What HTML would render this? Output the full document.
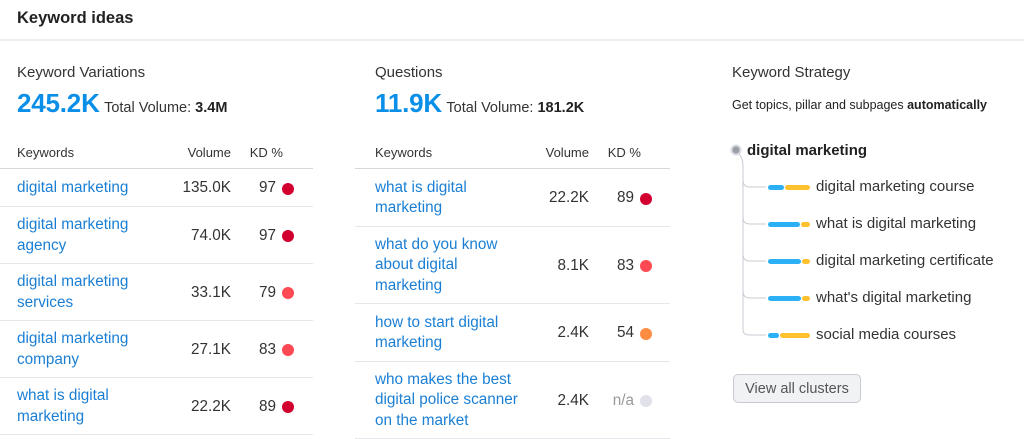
<!DOCTYPE html>
<html><head><meta charset="utf-8"><style>
*{margin:0;padding:0;box-sizing:border-box}
body{width:1024px;height:435px;overflow:hidden;background:#fff;font-family:"Liberation Sans",sans-serif;color:#333;position:relative}
.a{position:absolute;white-space:nowrap}
h1{position:absolute;left:17px;top:9px;font-size:16.5px;font-weight:bold;color:#222}
.div{position:absolute;left:0;top:39px;width:1024px;height:2px;background:#eceef2}
.sub{font-size:15px;color:#333}
.big{font-size:26px;font-weight:bold;color:#0a8fe8;letter-spacing:-0.2px}
.tv{font-size:14.5px;color:#333}
.tv b{color:#222}
.tbl{position:absolute;top:140px}
.hd{height:29px;border-bottom:1px solid #d6d8de;font-size:13px;color:#333;position:relative}
.row{border-bottom:1px solid #e6e7eb;position:relative;font-size:15.3px;line-height:20.5px}
.kw{position:absolute;color:#1a7fd4}
.vol{position:absolute;text-align:right;color:#333}
.kd{position:absolute;text-align:right;color:#333}
.dot{position:absolute;width:12px;height:12px;border-radius:50%}
.tree{position:absolute;font-size:15px;color:#333}
.bar{position:absolute;height:5px;border-radius:3px}
</style></head><body>
<h1>Keyword ideas</h1>
<div class="div"></div>

<div class="a sub" style="left:17px;top:64px">Keyword Variations</div>
<div class="a" style="left:17px;top:88px"><span class="big">245.2K</span> <span class="tv">Total Volume: <b>3.4M</b></span></div>

<div class="a sub" style="left:375px;top:64px">Questions</div>
<div class="a" style="left:375px;top:88px"><span class="big">11.9K</span> <span class="tv">Total Volume: <b>181.2K</b></span></div>

<div class="a sub" style="left:732px;top:64px">Keyword Strategy</div>
<div class="a" style="left:732px;top:98px;font-size:12.5px;color:#222">Get topics, pillar and subpages <b>automatically</b></div>

<div id="L" class="tbl" style="left:0;width:313px"></div>
<div id="M" class="tbl" style="left:355px;width:315px"></div>

<svg class="a" style="left:728px;top:142px" width="100" height="210">
<circle cx="8" cy="8" r="4.5" fill="#9a9ca6" stroke="#d8d9de" stroke-width="2"/>
<path d="M11 12 Q15 16 15 24 L15 188 Q15 193 22 193 L38 193" fill="none" stroke="#c9cbd2" stroke-width="1"/>
<path d="M15 38 Q15 45 22 45 L38 45 M15 75 Q15 82 22 82 L38 82 M15 112 Q15 119 22 119 L38 119 M15 149 Q15 156 22 156 L38 156" fill="none" stroke="#c9cbd2" stroke-width="1"/>
</svg>
<div class="tree" style="left:747px;top:142px;font-weight:bold;color:#222">digital marketing</div>
<div id="T"></div>

<div class="a" style="left:733px;top:374px;width:128px;height:29px;border:1px solid #c8cad0;border-radius:5px;background:#f1f2f4;font-size:14.5px;color:#555;text-align:center;line-height:28px">View all clusters</div>

<script>
const C={r:"#d1002f",l:"#ff4953",o:"#ff8c43",g:"#e0e1e9"};
function tbl(id,rows,volR,kdR,pl){
 let h='<div class="hd"><span class="a" style="left:'+pl+'px;top:5px">Keywords</span><span class="a" style="right:'+volR+'px;top:5px">Volume</span><span class="a" style="right:'+(kdR-7)+'px;top:5px">KD %</span></div>';
 for(const [k,v,d,c,H] of rows){
  const n=k.split('|').length;
  const mid=H/2;
  const tt=(H-20.5*n)/2;
  h+='<div class="row" style="height:'+H+'px"><div class="kw" style="left:'+pl+'px;top:'+tt+'px">'+k.split('|').join('<br>')+'</div>'+
  '<div class="vol" style="right:'+volR+'px;top:'+(mid-10)+'px">'+v+'</div>'+
  '<div class="kd" style="right:'+kdR+'px;top:'+(mid-10)+'px;'+(d=='n/a'?'color:#999':'')+'">'+d+'</div>'+
  '<div class="dot" style="right:'+(kdR-18)+'px;top:'+(mid-5.5)+'px;background:'+C[c]+'"></div></div>';
 }
 document.getElementById(id).innerHTML=h;
}
tbl('L',[["digital marketing","135.0K","97","r",38],["digital marketing|agency","74.0K","97","r",57],["digital marketing|services","33.1K","79","l",57],["digital marketing|company","27.1K","83","l",57],["what is digital|marketing","22.2K","89","r",57]],82,37,17);
tbl('M',[["what is digital|marketing","22.2K","89","r",58],["what do you know|about digital|marketing","8.1K","83","l",77],["how to start digital|marketing","2.4K","54","o",58],["who makes the best|digital police scanner|on the market","2.4K","n/a","g",77]],81,36,20);
const T=[["digital marketing course",16,25],["what is digital marketing",32,9],["digital marketing certificate",33,8],["what's digital marketing",33,8],["social media courses",11,30]];
let t='';T.forEach((x,i)=>{const y=187+37*i;
t+='<div class="bar" style="left:768px;top:'+(y-2)+'px;width:'+x[1]+'px;background:#2bb0f5"></div>';
t+='<div class="bar" style="left:'+(769+x[1])+'px;top:'+(y-2)+'px;width:'+x[2]+'px;background:#ffc12e"></div>';
t+='<div class="tree" style="left:816px;top:'+(y-9)+'px">'+x[0]+'</div>';});
document.getElementById('T').innerHTML=t;
</script>
</body></html>
